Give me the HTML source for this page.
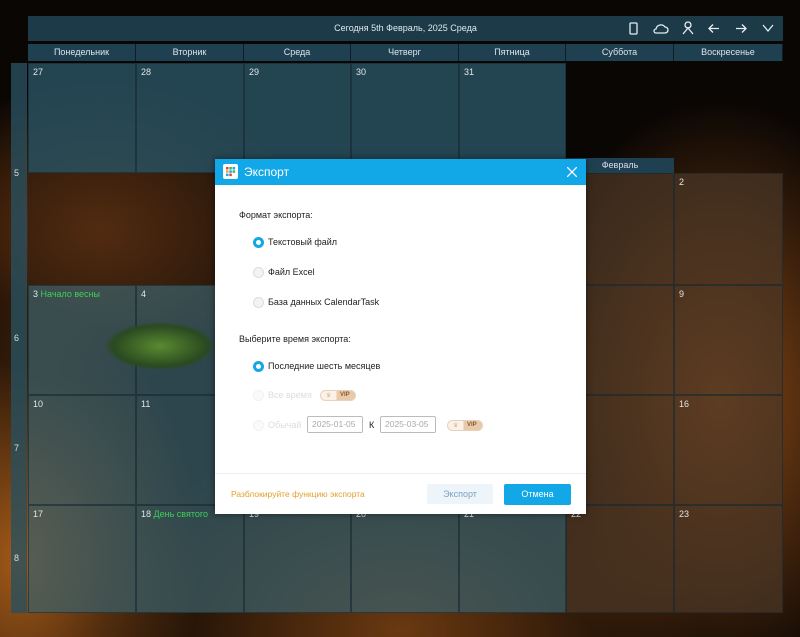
<!DOCTYPE html>
<html><head><meta charset="utf-8"><style>
*{margin:0;padding:0;box-sizing:border-box}
body{width:800px;height:637px;overflow:hidden;position:relative;font-family:"Liberation Sans","Noto Sans CJK SC",sans-serif;
background:
radial-gradient(ellipse 180px 260px at 20px 560px,rgba(200,110,30,.8),transparent),
radial-gradient(ellipse 200px 300px at 720px 400px,rgba(150,80,25,.9),transparent),
radial-gradient(ellipse 300px 200px at 400px 630px,rgba(130,70,20,.8),transparent),
radial-gradient(ellipse 200px 150px at 100px 230px,rgba(140,70,20,.8),transparent),
#0a0604;}
.a{position:absolute}
.hdr{left:28px;top:16px;width:755px;height:25px;background:#1c3a48;color:#dfe8ec;font-size:9px;text-align:center;line-height:25px}
.dn{top:44px;height:17px;background:#1f4050;color:#dbe5ea;font-size:9px;text-align:center;line-height:17px;border-right:1px solid #0d1e26}
.c{border:1px solid rgba(20,40,50,.6);color:#e0e6e8;font-size:9px;padding:3px 4px}
.t{background:rgba(40,80,95,.85)}
.g{background:rgba(60,95,105,.72)}
.b{background:rgba(75,55,38,.7)}
.wk{color:#ddd;font-size:9px;left:14px}
.dlg{left:215px;top:159px;width:371px;height:355px;background:#fff;box-shadow:0 0 6px rgba(0,0,0,.5)}
.tb{height:26px;background:#12a8e8;color:#fff;font-size:12px;line-height:26px;padding-left:29px;position:relative}
.lbl{font-size:9px;color:#222}
.r{width:11px;height:11px;border-radius:50%;border:1px solid #ddd;background:#f3f3f3}
.r.on{border:3px solid #12a8e8;background:#fff}
.vip{width:36px;height:11px;border-radius:6px;border:1px solid #e8d2bc;background:linear-gradient(90deg,#fbf1e6 45%,#e8c9a9 45%);font-size:6px;color:#8a5a30;line-height:9px}
.vip i{position:absolute;left:5px;top:1px;font-style:normal;color:#d8b890;font-size:6px}
.vip b{position:absolute;left:19px;top:0;font-weight:bold}
.inp{width:56px;height:17px;border:1px solid #bbb;border-radius:2px;font-size:8.5px;color:#aaa;line-height:15px;padding-left:4px}
</style></head><body>
<div class="a hdr">Сегодня 5th Февраль, 2025 Среда</div>
<svg class="a" style="left:620px;top:20px" width="160" height="17" fill="none" stroke="#e6eef2" stroke-width="1.3">
<rect x="10" y="3" width="7" height="11" rx="1"/>
<path d="M36 13h9a3 3 0 0 0 0-6 5 5 0 0 0-9 2 2 2 0 0 0 0 4z"/>
<circle cx="68" cy="5" r="3"/><path d="M63 14l5-6 5 6"/>
<path d="M99 8.5h-10m4-4l-4 4 4 4"/>
<path d="M116 8.5h10m-4-4l4 4-4 4"/>
<path d="M143 5l5 6 5-6"/>
</svg>
<div class="a dn" style="left:28px;width:108px">Понедельник</div>
<div class="a dn" style="left:136px;width:108px">Вторник</div>
<div class="a dn" style="left:244px;width:107px">Среда</div>
<div class="a dn" style="left:351px;width:108px">Четверг</div>
<div class="a dn" style="left:459px;width:107px">Пятница</div>
<div class="a dn" style="left:566px;width:108px">Суббота</div>
<div class="a dn" style="left:674px;width:109px">Воскресенье</div>
<div class="a" style="left:11px;top:63px;width:16px;height:550px;background:rgba(40,80,95,.8)"></div>
<div class="a wk" style="top:168px">5</div><div class="a wk" style="top:333px">6</div><div class="a wk" style="top:443px">7</div><div class="a wk" style="top:553px">8</div>
<div class="a c t" style="left:28px;top:63px;width:108px;height:110px">27</div>
<div class="a c t" style="left:136px;top:63px;width:108px;height:110px">28</div>
<div class="a c t" style="left:244px;top:63px;width:107px;height:110px">29</div>
<div class="a c t" style="left:351px;top:63px;width:108px;height:110px">30</div>
<div class="a c t" style="left:459px;top:63px;width:107px;height:110px">31</div>
<div class="a" style="left:566px;top:158px;width:108px;height:15px;background:#1f4050;color:#dde;font-size:9px;text-align:center;line-height:15px">Февраль</div>
<div class="a" style="left:28px;top:173px;width:538px;height:112px;background:rgba(50,30,15,.5)"></div>
<div class="a c b" style="left:566px;top:173px;width:108px;height:112px"></div>
<div class="a c b" style="left:674px;top:173px;width:109px;height:112px">2</div>
<div class="a c g" style="left:28px;top:285px;width:108px;height:110px">3 <span style="color:#3fcf5a">Начало весны</span></div>
<div class="a c g" style="left:136px;top:285px;width:108px;height:110px">4</div>
<div class="a c g" style="left:244px;top:285px;width:322px;height:110px"></div>
<div class="a c b" style="left:566px;top:285px;width:108px;height:110px"></div>
<div class="a c b" style="left:674px;top:285px;width:109px;height:110px">9</div>
<div class="a" style="left:105px;top:322px;width:110px;height:48px;border-radius:50%;background:radial-gradient(#5a8a30,#2a4a20 60%,rgba(30,40,40,0) 72%)"></div>
<div class="a c g" style="left:28px;top:395px;width:108px;height:110px">10</div>
<div class="a c g" style="left:136px;top:395px;width:108px;height:110px">11</div>
<div class="a c g" style="left:244px;top:395px;width:322px;height:110px"></div>
<div class="a c b" style="left:566px;top:395px;width:108px;height:110px"></div>
<div class="a c b" style="left:674px;top:395px;width:109px;height:110px">16</div>
<div class="a c g" style="left:28px;top:505px;width:108px;height:108px">17</div>
<div class="a c g" style="left:136px;top:505px;width:108px;height:108px">18 <span style="color:#3fcf5a">День святого</span></div>
<div class="a c g" style="left:244px;top:505px;width:107px;height:108px">19</div>
<div class="a c g" style="left:351px;top:505px;width:108px;height:108px">20</div>
<div class="a c g" style="left:459px;top:505px;width:107px;height:108px">21</div>
<div class="a c b" style="left:566px;top:505px;width:108px;height:108px">22</div>
<div class="a c b" style="left:674px;top:505px;width:109px;height:108px">23</div>

<div class="a dlg">
 <div class="tb">Экспорт
  <svg class="a" style="left:8px;top:5px" width="15" height="15"><rect width="15" height="15" rx="2" fill="#fff"/>
  <rect x="3" y="3" width="2.5" height="2.5" fill="#e0433a"/><rect x="6.3" y="3" width="2.5" height="2.5" fill="#3cb44b"/><rect x="9.6" y="3" width="2.5" height="2.5" fill="#12a8e8"/>
  <rect x="3" y="6.3" width="2.5" height="2.5" fill="#f5a623"/><rect x="6.3" y="6.3" width="2.5" height="2.5" fill="#12a8e8"/><rect x="9.6" y="6.3" width="2.5" height="2.5" fill="#3cb44b"/>
  <rect x="3" y="9.6" width="2.5" height="2.5" fill="#12a8e8"/><rect x="6.3" y="9.6" width="2.5" height="2.5" fill="#e0433a"/></svg>
  <svg class="a" style="left:352px;top:8px" width="10" height="10" stroke="#fff" stroke-width="1.3"><path d="M0 0L10 10M10 0L0 10"/></svg>
 </div>
 <div class="a lbl" style="left:24px;top:51px">Формат экспорта:</div>
 <div class="a r on" style="left:38px;top:78px"></div><div class="a lbl" style="left:53px;top:78px">Текстовый файл</div>
 <div class="a r" style="left:38px;top:108px"></div><div class="a lbl" style="left:53px;top:108px">Файл Excel</div>
 <div class="a r" style="left:38px;top:138px"></div><div class="a lbl" style="left:53px;top:138px">База данных CalendarTask</div>
 <div class="a lbl" style="left:24px;top:175px">Выберите время экспорта:</div>
 <div class="a r on" style="left:38px;top:202px"></div><div class="a lbl" style="left:53px;top:202px">Последние шесть месяцев</div>
 <div class="a r" style="left:38px;top:231px;opacity:.4"></div><div class="a lbl" style="left:53px;top:231px;color:#ddd">Все время</div>
 <div class="a vip" style="left:105px;top:231px"><i>♛</i><b>VIP</b></div>
 <div class="a r" style="left:38px;top:261px;opacity:.4"></div><div class="a lbl" style="left:53px;top:261px;color:#ddd">Обычай</div>
 <div class="a inp" style="left:92px;top:257px">2025-01-05</div>
 <div class="a lbl" style="left:154px;top:261px">К</div>
 <div class="a inp" style="left:165px;top:257px">2025-03-05</div>
 <div class="a vip" style="left:232px;top:261px"><i>♛</i><b>VIP</b></div>
 <div class="a" style="left:0;top:314px;width:371px;height:1px;background:#eee"></div>
 <div class="a" style="left:16px;top:330px;font-size:8.5px;color:#e0a030">Разблокируйте функцию экспорта</div>
 <div class="a" style="left:212px;top:325px;width:66px;height:20px;background:#eef5fa;color:#7aa0c0;font-size:9px;text-align:center;line-height:20px;border-radius:2px">Экспорт</div>
 <div class="a" style="left:289px;top:325px;width:67px;height:21px;background:#12a8e8;color:#fff;font-size:9px;text-align:center;line-height:21px;border-radius:2px">Отмена</div>
</div>
</body></html>
